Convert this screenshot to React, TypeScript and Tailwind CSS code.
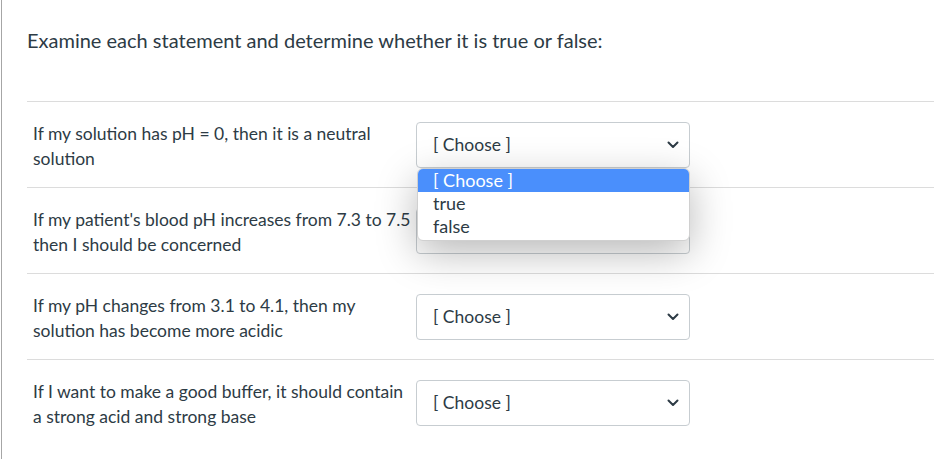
const rows = [
  "If my solution has pH = 0, then it is a neutral solution",
  "If my patient's blood pH increases from 7.3 to 7.5 then I should be concerned",
  "If my pH changes from 3.1 to 4.1, then my solution has become more acidic",
  "If I want to make a good buffer, it should contain a strong acid and strong base",
];

function Chevron() {
  return (
    <svg width="12" height="8" viewBox="0 0 12 8" className="text-[#2d3b45]">
      <path d="M1.5 1.5 L6 6 L10.5 1.5" fill="none" stroke="currentColor" strokeWidth="2" strokeLinecap="round" strokeLinejoin="round" />
    </svg>
  );
}

function FakeSelect({ open }: { open?: boolean }) {
  return (
    <div className="relative">
      <div className="flex h-[46px] w-[274px] items-center justify-between rounded-[4px] border border-[#c7cdd1] bg-white pl-[16px] pr-[10px] text-[17.5px] text-[#2d3b45]">
        <span>[ Choose ]</span>
        <Chevron />
      </div>
      {open && (
        <ul className="absolute left-px top-full z-10 w-[273px] overflow-hidden rounded-[6px] border border-[#d0d0d0] bg-white pb-[2px] text-[18px] leading-[23px] text-[#2d3b45] shadow-[0_12px_40px_rgba(0,0,0,0.28)]">
          <li className="bg-[#4a8ffc] pl-[15px] text-white">[ Choose ]</li>
          <li className="pl-[15px]">true</li>
          <li className="pl-[15px]">false</li>
        </ul>
      )}
    </div>
  );
}

export default function App() {
  return (
    <div className="ml-px h-[459px] w-[933px] border-l border-[#a6a6a6] bg-white font-['Lato','Noto_Sans',sans-serif] text-[#2d3b45]">
      <div className="pl-[25px]">
        <h2 className="h-[101px] pt-[26px] text-[20px] leading-[28px]">
          Examine each statement and determine whether it is true or false:
        </h2>
        {rows.map((text, i) => (
          <div key={i} className="flex h-[86px] items-start border-t border-[#dcdcdc] pl-[6px] pt-[20px]">
            <p className="-mt-[1px] w-[383px] pr-[3px] text-[17.5px] leading-[25px]">{text}</p>
            <FakeSelect open={i === 0} />
          </div>
        ))}
      </div>
    </div>
  );
}
